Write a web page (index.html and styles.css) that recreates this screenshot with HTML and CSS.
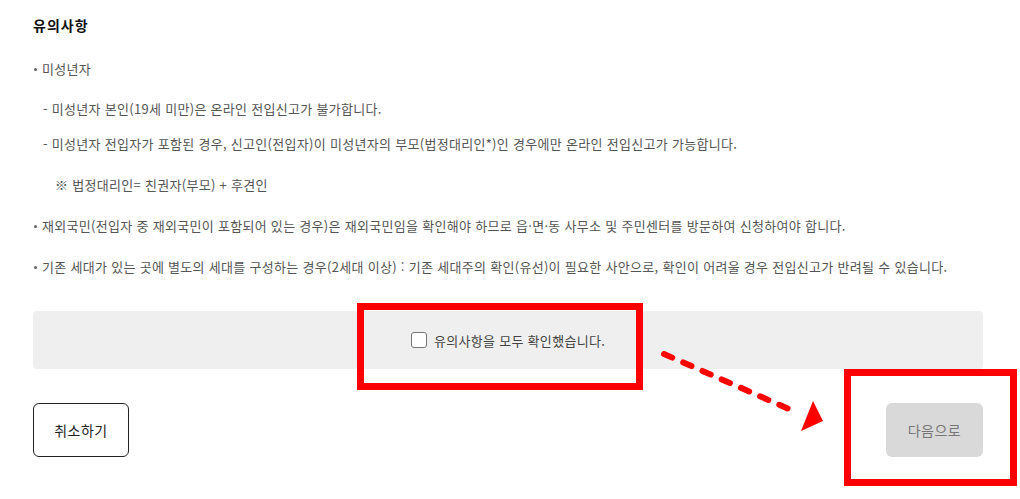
FILE: index.html
```html
<!DOCTYPE html>
<html lang="ko">
<head>
  <meta charset="UTF-8" />
  <meta name="viewport" content="width=device-width, initial-scale=1.0"/>
  <title>전입신고 - 유의사항</title>
  <link rel="stylesheet" href="styles.css">
</head>
<body>

<div class="page">
  <h3 class="title">유의사항</h3>

  <ul class="notes">
    <li class="dot first">미성년자</li>
    <li class="sub s1">- 미성년자 본인(19세 미만)은 온라인 전입신고가 불가합니다.</li>
    <li class="sub s2">- 미성년자 전입자가 포함된 경우, 신고인(전입자)이 미성년자의 부모(법정대리인*)인 경우에만 온라인 전입신고가 가능합니다.</li>
    <li class="ref">※ 법정대리인= 친권자(부모) + 후견인</li>
    <li class="dot">재외국민(전입자 중 재외국민이 포함되어 있는 경우)은 재외국민임을 확인해야 하므로 읍·면·동 사무소 및 주민센터를 방문하여 신청하여야 합니다.</li>
    <li class="dot">기존 세대가 있는 곳에 별도의 세대를 구성하는 경우(2세대 이상) : 기존 세대주의 확인(유선)이 필요한 사안으로, 확인이 어려울 경우 전입신고가 반려될 수 있습니다.</li>
  </ul>

  <div class="agree">
    <label for="agree-chk">
      <input type="checkbox" id="agree-chk">
      <span class="box"></span>
      유의사항을 모두 확인했습니다.
    </label>
  </div>

  <div class="actions">
    <button class="btn-cancel">취소하기</button>
    <button class="btn-next" disabled>다음으로</button>
  </div>
</div>

<!-- annotations -->
<div class="mark mark-agree"></div>
<div class="mark mark-next"></div>
<svg class="arrow" width="1020" height="499" viewBox="0 0 1020 499">
  <line x1="664" y1="354" x2="798" y2="413" stroke="#f00" stroke-width="6" stroke-linecap="round" stroke-dasharray="9 12"/>
  <polygon points="813,401 823,421 801,431" fill="#f00"/>
</svg>

</body>
</html>
```

FILE: styles.css
```css
body {
  margin: 0;
  font-family: "Noto Sans CJK KR", "Noto Sans", sans-serif;
  letter-spacing: 0.3px;
  background: #fff;
  color: #555;
}
.page {
  padding: 15px 37px 0 33px;
}
.title {
  margin: 0;
  font-size: 14px;
  line-height: 20px;
  letter-spacing: 1px;
  font-weight: bold;
  color: #111;
}
.notes {
  list-style: none;
  margin: 0;
  padding: 0;
  font-size: 13px;
  line-height: 20px;
}
.notes li {
  white-space: nowrap;
}
.dot {
  position: relative;
  padding-left: 9px;
  margin-top: 21px;
}
.dot::before {
  content: "";
  position: absolute;
  left: 1px;
  top: 9px;
  width: 3px;
  height: 3px;
  border-radius: 50%;
  background: #666;
}
.dot.first {
  margin-top: 24px;
}
.sub {
  padding-left: 10px;
}
.s1 {
  margin-top: 20px;
}
.s2 {
  margin-top: 15px;
}
.ref {
  padding-left: 22px;
  margin-top: 21px;
}
.agree {
  margin-top: 34px;
  height: 58px;
  background: #efefef;
  border-radius: 4px;
  display: flex;
  align-items: center;
  justify-content: center;
}
.agree label {
  display: flex;
  align-items: center;
  gap: 7px;
  font-size: 13px;
  color: #444;
  cursor: pointer;
}
.agree input {
  display: none;
}
.box {
  width: 14px;
  height: 14px;
  border: 1.5px solid #777;
  border-radius: 3px;
  background: #fff;
}
.actions {
  margin-top: 34px;
  display: flex;
  justify-content: space-between;
}
.btn-cancel, .btn-next {
  height: 54px;
  font-family: inherit;
  font-size: 14px;
  letter-spacing: 0.5px;
  border-radius: 6px;
  cursor: pointer;
}
.btn-cancel {
  width: 96px;
  background: #fff;
  border: 1px solid #222;
  color: #222;
}
.btn-next {
  width: 97px;
  background: #d9d9d9;
  border: none;
  color: #777;
}
.mark {
  position: absolute;
  border: 7px solid #f00;
  box-sizing: border-box;
}
.mark-agree {
  left: 357px;
  top: 303px;
  width: 286px;
  height: 87px;
}
.mark-next {
  left: 844px;
  top: 369px;
  width: 173px;
  height: 117px;
}
.arrow {
  position: absolute;
  left: 0;
  top: 0;
  pointer-events: none;
}
```
